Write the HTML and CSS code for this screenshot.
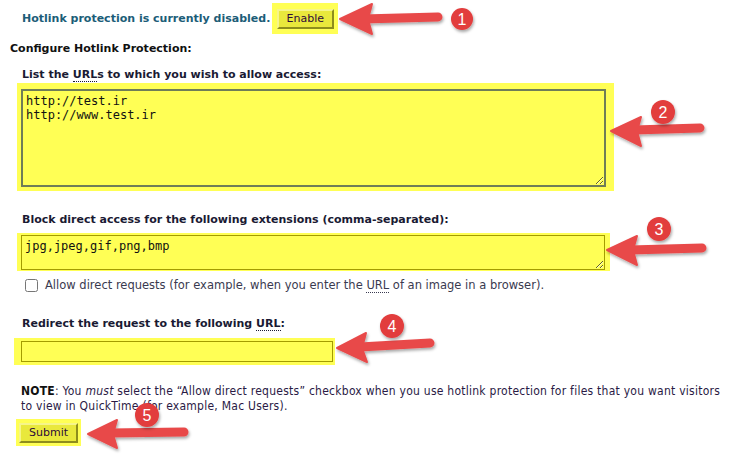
FILE: index.html
```html
<!DOCTYPE html>
<html lang="en">
<head>
  <meta charset="UTF-8">
  <title>Hotlink Protection</title>
  <meta name="viewport" content="width=device-width, initial-scale=1">
  <link rel="stylesheet" href="styles.css">
</head>
<body>
  <div class="page">
    <div class="status">
      <span class="status-text">Hotlink protection is currently disabled.</span>
      <span class="mark mark-enable"><button type="button" class="btn">Enable</button></span>
    </div>

    <h3 class="title">Configure Hotlink Protection:</h3>

    <form class="config">
      <label class="field-label" for="urls">List the <abbr>URL</abbr>s to which you wish to allow access:</label>
      <div class="mark mark-urls">
        <textarea id="urls" class="box box-urls" spellcheck="false">http://test.ir
http://www.test.ir</textarea>
      </div>

      <label class="field-label label-ext" for="ext">Block direct access for the following extensions (comma-separated):</label>
      <div class="mark mark-ext">
        <textarea id="ext" class="box box-ext" spellcheck="false">jpg,jpeg,gif,png,bmp</textarea>
      </div>
      <label class="check">
        <input type="checkbox" class="check-box">
        <span>Allow direct requests (for example, when you enter the <abbr>URL</abbr> of an image in a browser).</span>
      </label>

      <label class="field-label label-redirect" for="redirect">Redirect the request to the following <abbr>URL</abbr>:</label>
      <div class="mark mark-redirect">
        <input type="text" id="redirect" class="box box-redirect">
      </div>

      <p class="note"><b>NOTE</b>: You <i>must</i> select the “Allow direct requests” checkbox when you use hotlink protection for files that you want visitors to view in QuickTime (for example, Mac Users).</p>

      <div class="mark mark-submit"><button type="submit" class="btn">Submit</button></div>
    </form>

    <svg class="notes" width="733" height="457" viewBox="0 0 733 457">
      <defs>
        <filter id="shade" x="-20%" y="-40%" width="140%" height="180%">
          <feDropShadow dx="1" dy="2" stdDeviation="1.5" flood-color="#000" flood-opacity="0.35"/>
        </filter>
      </defs>
      <g fill="#e84a4a" stroke="#e84a4a" filter="url(#shade)">
        <line x1="362" y1="19" x2="438" y2="17" stroke-width="9" stroke-linecap="round"/>
        <polygon points="340,19 372,4 368,19 372,34" stroke-width="2" stroke-linejoin="round"/>

        <line x1="634" y1="130" x2="700" y2="128" stroke-width="9" stroke-linecap="round"/>
        <polygon points="611,131 641,117 637,131 641,146" stroke-width="2" stroke-linejoin="round"/>

        <line x1="630" y1="250" x2="702" y2="248" stroke-width="9" stroke-linecap="round"/>
        <polygon points="607,250 637,236 633,250 637,265" stroke-width="2" stroke-linejoin="round"/>

        <line x1="360" y1="347" x2="430" y2="343" stroke-width="9" stroke-linecap="round"/>
        <polygon points="337,348 366,333 362,348 367,362" stroke-width="2" stroke-linejoin="round"/>

        <line x1="110" y1="433" x2="184" y2="432" stroke-width="9" stroke-linecap="round"/>
        <polygon points="88,434 117,420 113,434 117,448" stroke-width="2" stroke-linejoin="round"/>
      </g>
      <g fill="#e23c3c" filter="url(#shade)">
        <circle cx="462" cy="19" r="11"/>
        <circle cx="663" cy="112" r="12"/>
        <circle cx="659" cy="229" r="12"/>
        <circle cx="392" cy="326" r="12"/>
        <circle cx="147" cy="415" r="12"/>
      </g>
      <g class="num" fill="#fff" text-anchor="middle">
        <text x="462" y="25">1</text>
        <text x="663" y="118">2</text>
        <text x="659" y="235">3</text>
        <text x="392" y="332">4</text>
        <text x="147" y="421">5</text>
      </g>
    </svg>
  </div>
</body>
</html>
```

FILE: styles.css
```css
body {
  margin: 0;
  background: #fff;
  font-family: "DejaVu Sans", Verdana, sans-serif;
  font-size: 11px;
  color: #1a1a33;
}
.page {
  position: relative;
  width: 733px;
  height: 457px;
  overflow: hidden;
}
.status {
  display: flex;
  align-items: center;
  padding: 3px 0 0 22px;
  height: 31px;
}
.status-text {
  font-weight: bold;
  color: #1c5d78;
}
.mark {
  background: #ffff55;
}
.mark-enable {
  display: flex;
  align-items: center;
  justify-content: center;
  margin-left: 2px;
  width: 66px;
  height: 31px;
}
.btn {
  font-family: "DejaVu Sans", Verdana, sans-serif;
  font-size: 11px;
  color: #2d0a3a;
  background: #e9e83c;
  border: 2px solid;
  border-color: #f6f58a #8e8d1c #8e8d1c #f6f58a;
  padding: 1px 8px;
  height: 20px;
}
.title {
  margin: 8px 0 0 10px;
  font-size: 11px;
  font-weight: bold;
  color: #111;
}
.config {
  padding-left: 17px;
}
.field-label {
  display: block;
  font-weight: bold;
  padding-left: 5px;
  margin-top: 13px;
  height: 14px;
}
abbr {
  text-decoration: none;
  border-bottom: 1px dotted #1a1a33;
}
.mark-urls {
  width: 589px;
  margin-top: 1px;
  padding: 6px 4px 4px 4px;
}
.box {
  display: block;
  box-sizing: border-box;
  margin: 0;
  background: #ffff55;
  font-family: "DejaVu Sans Mono", "Courier New", monospace;
  font-size: 12px;
  color: #111;
  padding: 3px 3px;
  outline: none;
}
.box-urls {
  width: 585px;
  height: 98px;
  border: 2px solid #6f7d57;
  resize: vertical;
}
.label-ext {
  margin-top: 22px;
}
.mark-ext {
  width: 589px;
  margin-top: 6px;
  padding: 2px 0 1px 4px;
}
.box-ext {
  width: 584px;
  height: 35px;
  border: 1px solid #a39c00;
  resize: vertical;
}
.check {
  display: flex;
  align-items: center;
  gap: 7px;
  margin: 7px 0 0 8px;
  font-size: 11.5px;
  color: #3a3a50;
}
.check-box {
  margin: 0;
  width: 13px;
  height: 13px;
}
.check abbr {
  border-bottom-color: #3a3a50;
}
.label-redirect {
  margin-top: 25px;
}
.mark-redirect {
  width: 321px;
  margin: 7px 0 0 -3px;
  padding: 3px 0 3px 7px;
  box-sizing: border-box;
  height: 27px;
  display: flex;
  align-items: center;
}
.box-redirect {
  width: 312px;
  height: 21px;
  border: 1px solid #a39c00;
}
.note {
  margin: 19px 0 0 4px;
  max-width: 708px;
  font-family: "DejaVu Sans Condensed", "DejaVu Sans", sans-serif;
  font-size: 12px;
  letter-spacing: 0.25px;
  line-height: 15px;
  color: #2a1a45;
}
.note b {
  color: #111;
}
.mark-submit {
  display: flex;
  align-items: center;
  justify-content: center;
  margin: 5px 0 0 -1px;
  width: 65px;
  height: 27px;
}
.notes {
  position: absolute;
  left: 0;
  top: 0;
  pointer-events: none;
}
.num {
  font-family: "Liberation Sans", Arial, sans-serif;
  font-size: 16px;
}
```
